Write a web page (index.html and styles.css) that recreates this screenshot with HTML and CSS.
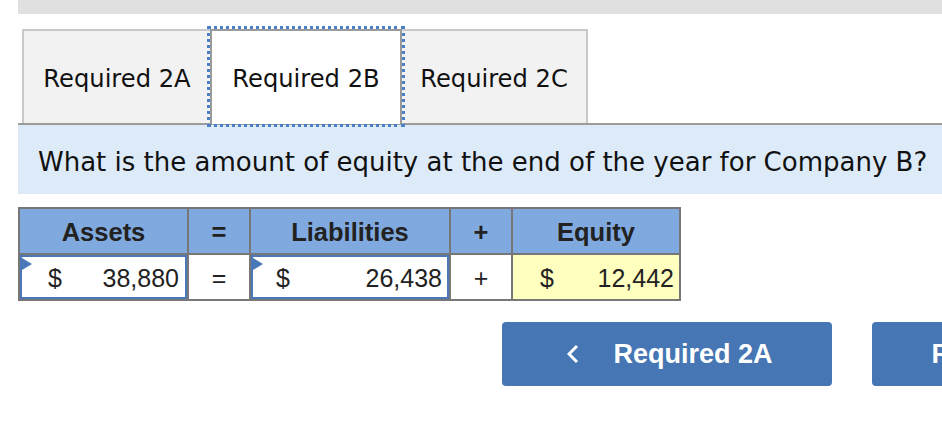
FILE: index.html
```html
<!DOCTYPE html>
<html lang="en">
<head>
<meta charset="utf-8">
<title>Required 2B</title>
<link rel="stylesheet" href="styles.css">
</head>
<body>
<div class="page">
  <div class="topbar"></div>
  <div class="tabs">
    <div class="tab tab-a">Required 2A</div>
    <div class="tab tab-b active">Required 2B</div>
    <div class="tab tab-c">Required 2C</div>
  </div>
  <div class="panel">What is the amount of equity at the end of the year for Company B?</div>
  <div class="eq">
    <div class="hd">Assets</div>
    <div class="hd">=</div>
    <div class="hd">Liabilities</div>
    <div class="hd">+</div>
    <div class="hd">Equity</div>

    <div class="cell"><div class="input in-assets"><span class="flag"></span><span>$</span><span>38,880</span></div></div>
    <div class="cell op">=</div>
    <div class="cell"><div class="input in-liab"><span class="flag"></span><span>$</span><span>26,438</span></div></div>
    <div class="cell op">+</div>
    <div class="cell result"><span>$</span><span>12,442</span></div>
  </div>
  <div class="nav">
    <div class="btn">
      <svg class="chev" width="12" height="20" viewBox="0 0 12 20"><polyline points="10,2 2,10 10,18" fill="none" stroke="#fff" stroke-width="3"/></svg>
      <span>Required 2A</span>
    </div>
    <div class="btn btn-next">
      <span>Required 2C</span>
      <svg class="chev" width="12" height="20" viewBox="0 0 12 20"><polyline points="2,2 10,10 2,18" fill="none" stroke="#fff" stroke-width="3"/></svg>
    </div>
  </div>
</div>
</body>
</html>
```

FILE: styles.css
```css
html, body {
  margin: 0;
  padding: 0;
  background: #ffffff;
  overflow: hidden;
}
.page {
  width: 942px;
  height: 436px;
  overflow: hidden;
}
.topbar {
  margin-left: 18px;
  height: 14px;
  background: #e0e0e0;
}
.tabs {
  display: flex;
  margin: 15px 0 0 22px;
  height: 94px;
}
.tab {
  box-sizing: border-box;
  height: 94px;
  display: flex;
  align-items: center;
  justify-content: center;
  padding-top: 3px;
  background: #f2f2f2;
  border: 2px solid #c9c9c9;
  border-bottom: none;
  font-family: "DejaVu Sans", Verdana, sans-serif;
  font-size: 24.2px;
  color: #111;
}
.tab-a { width: 188px; border-right: none; }
.tab-b { width: 192px; }
.tab-c { width: 186px; border-left: none; }
.tab.active {
  background: #ffffff;
  border-color: #9a9a9a;
  outline: 3px dotted #4a80c8;
  outline-offset: 0;
  position: relative;
  z-index: 1;
  height: 95px;
}
.panel {
  margin-left: 18px;
  border-top: 2px solid #9c9c9c;
  background: #ddebf8;
  display: flex;
  align-items: center;
  padding: 4px 0 0 20px;
  box-sizing: border-box;
  height: 71px;
  font-family: "DejaVu Sans", Verdana, sans-serif;
  font-size: 26px;
  color: #111;
  white-space: nowrap;
}
.eq {
  margin: 13px 0 0 18px;
  width: 663px;
  box-sizing: border-box;
  padding: 2px;
  background: #777777;
  display: grid;
  grid-template-columns: 167px 60px 198px 60px 166px;
  grid-template-rows: 44px 44px;
  gap: 2px;
  font-family: "Liberation Sans", Arial, sans-serif;
  color: #222;
}
.hd {
  background: #80aadf;
  display: flex;
  align-items: center;
  justify-content: center;
  font-weight: bold;
  font-size: 25.5px;
  padding-top: 2px;
}
.cell {
  background: #ffffff;
  display: flex;
  align-items: center;
  font-size: 25px;
}
.op {
  justify-content: center;
  padding-top: 2px;
}
.input {
  position: relative;
  box-sizing: border-box;
  width: 100%;
  height: 100%;
  border: 2px solid #4a78b8;
  display: flex;
  align-items: center;
  justify-content: space-between;
  padding-top: 2px;
}
.in-assets { padding-left: 26px; padding-right: 6px; }
.in-liab { padding-left: 23px; padding-right: 5px; }
.flag {
  position: absolute;
  left: 0;
  top: 1px;
  width: 0;
  height: 0;
  border-left: 10px solid #4a78b8;
  border-top: 6px solid transparent;
  border-bottom: 6px solid transparent;
}
.result {
  background: #ffffc0;
  justify-content: space-between;
  padding: 2px 5px 0 27px;
}
.nav {
  display: flex;
  gap: 40px;
  margin: 21px 0 0 502px;
}
.btn {
  flex-shrink: 0;
  width: 330px;
  height: 64px;
  border-radius: 4px;
  background: #4676b4;
  color: #ffffff;
  display: flex;
  align-items: center;
  justify-content: center;
  gap: 34px;
  padding-left: 6px;
  box-sizing: border-box;
  font-family: "Liberation Sans", Arial, sans-serif;
  font-weight: bold;
  font-size: 27px;
}
.btn-next {
  padding-left: 0;
  padding-right: 6px;
}
.chev {
  display: block;
}
```
